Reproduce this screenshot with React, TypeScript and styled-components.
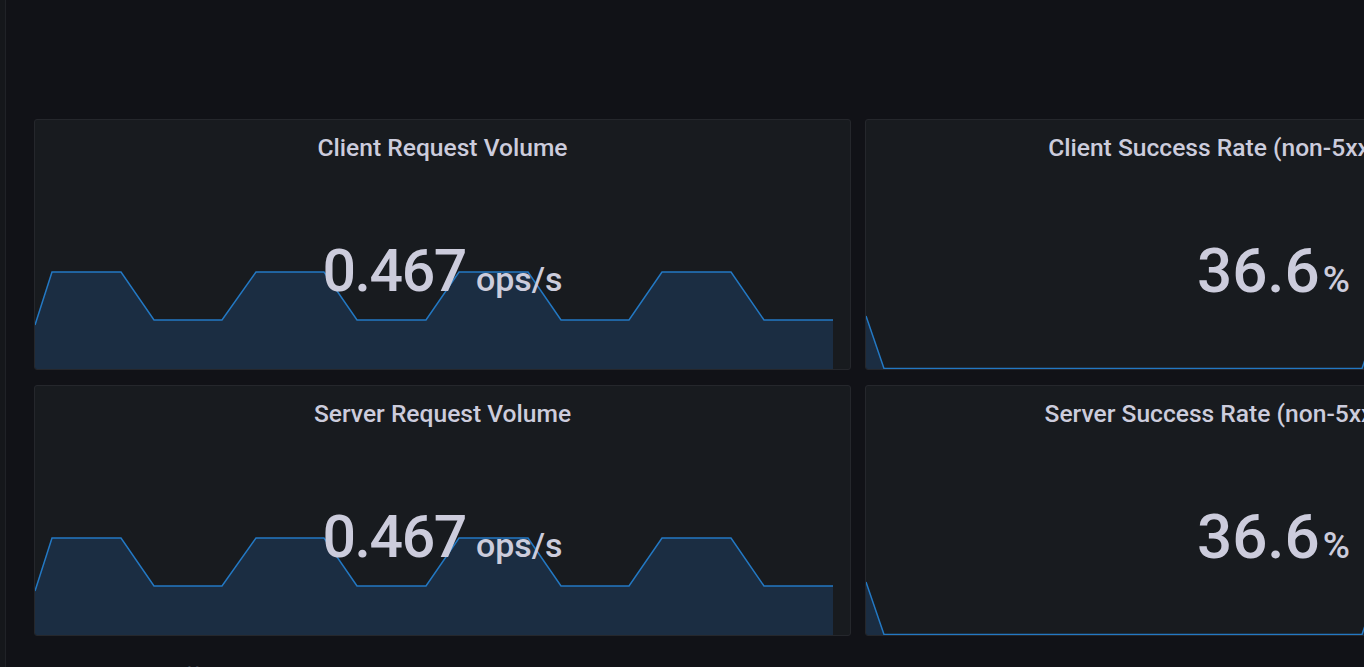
import React from "react";
import styled, { createGlobalStyle } from "styled-components";

const Global = createGlobalStyle`
  html, body {
    margin: 0;
    padding: 0;
    background: #111217;
    overflow: hidden;
    width: 1364px;
    height: 667px;
  }
  #root { height: 667px; }
  * { box-sizing: border-box; }
`;

const Page = styled.div`
  display: flex;
  height: 667px;
  font-family: Roboto, "Liberation Sans", sans-serif;
  color: #ccccdc;
`;

const SideRail = styled.div`
  flex: 0 0 6px;
  background: #15171b;
  border-right: 1px solid #202227;
`;

const Main = styled.main`
  flex: 0 0 auto;
  padding: 119px 0 0 28px;
  display: flex;
  flex-direction: column;
`;

const Grid = styled.div`
  display: grid;
  grid-template-columns: 817px 817px;
  grid-auto-rows: 251px;
  column-gap: 14px;
  row-gap: 15px;
`;

const Panel = styled.section`
  position: relative;
  background: #181b1f;
  border: 1px solid #25272c;
  border-radius: 3px;
  overflow: hidden;
  display: flex;
  flex-direction: column;
  align-items: center;
`;

const Title = styled.h2`
  position: relative;
  z-index: 1;
  margin: 0;
  padding-top: 14px;
  font-size: 24.6px;
  line-height: 28px;
  font-weight: 500;
  color: #ccccdc;
  white-space: nowrap;
`;

const ValueRow = styled.div`
  position: relative;
  z-index: 1;
  margin-top: 79px;
  display: flex;
  align-items: baseline;
  white-space: nowrap;
`;

const Value = styled.span<{ $size: number; $spacing: number }>`
  font-size: ${(p) => p.$size}px;
  line-height: 60px;
  letter-spacing: ${(p) => p.$spacing}px;
  font-weight: 500;
  color: #ccccdc;
`;

const Unit = styled.span<{ $gap: number; $size: number }>`
  margin-left: ${(p) => p.$gap}px;
  font-size: ${(p) => p.$size}px;
  font-weight: 500;
  color: #ccccdc;
`;

const Spark = styled.svg`
  position: absolute;
  left: 0;
  bottom: 0;
  width: 798px;
  height: 100px;
`;

const RowHeader = styled.div`
  margin-top: 27px;
  padding-left: 46px;
  font-size: 24px;
  font-weight: 500;
  line-height: 28px;
  color: #ccccdc;
  white-space: nowrap;
`;

const volumePts: [number, number][] = [
  [0, 56], [17, 3], [86, 3], [119, 51], [187, 51], [221, 3], [289, 3],
  [322, 51], [391, 51], [424, 3], [493, 3], [526, 51], [594, 51],
  [627, 3], [696, 3], [729, 51], [798, 51],
];

const ratePts: [number, number][] = [
  [0, 47], [18, 99.5], [496, 99.5], [514, 47], [532, 99.5], [798, 99.5],
];

function Sparkline({ pts }: { pts: [number, number][] }) {
  const line = pts.map((p, i) => `${i ? "L" : "M"}${p[0]} ${p[1]}`).join(" ");
  const last = pts[pts.length - 1];
  const area = `${line} L${last[0]} 100 L0 100 Z`;
  return (
    <Spark viewBox="0 0 798 100" preserveAspectRatio="none">
      <path d={area} fill="#1b2d42" />
      <path d={line} fill="none" stroke="#2378c3" strokeWidth={1.5} strokeLinejoin="miter" />
    </Spark>
  );
}

type Stat = {
  title: string;
  value: string;
  valueSize: number;
  spacing: number;
  unit: string;
  gap: number;
  unitSize: number;
  pts: [number, number][];
};

const stats: Stat[] = [
  { title: "Client Request Volume", value: "0.467", valueSize: 59, spacing: -1.4, unit: "ops/s", gap: 10, unitSize: 34, pts: volumePts },
  { title: "Client Success Rate (non-5xx responses)", value: "36.6", valueSize: 62, spacing: 0, unit: "%", gap: 3, unitSize: 37, pts: ratePts },
  { title: "Server Request Volume", value: "0.467", valueSize: 59, spacing: -1.4, unit: "ops/s", gap: 10, unitSize: 34, pts: volumePts },
  { title: "Server Success Rate (non-5xx responses)", value: "36.6", valueSize: 62, spacing: 0, unit: "%", gap: 3, unitSize: 37, pts: ratePts },
];

export default function App() {
  return (
    <>
      <Global />
      <Page>
        <SideRail />
        <Main>
          <Grid>
            {stats.map((s) => (
              <Panel key={s.title}>
                <Sparkline pts={s.pts} />
                <Title>{s.title}</Title>
                <ValueRow>
                  <Value $size={s.valueSize} $spacing={s.spacing}>{s.value}</Value>
                  <Unit $gap={s.gap} $size={s.unitSize}>{s.unit}</Unit>
                </ValueRow>
              </Panel>
            ))}
          </Grid>
          <RowHeader>Client Traffic by Route</RowHeader>
        </Main>
      </Page>
    </>
  );
}
